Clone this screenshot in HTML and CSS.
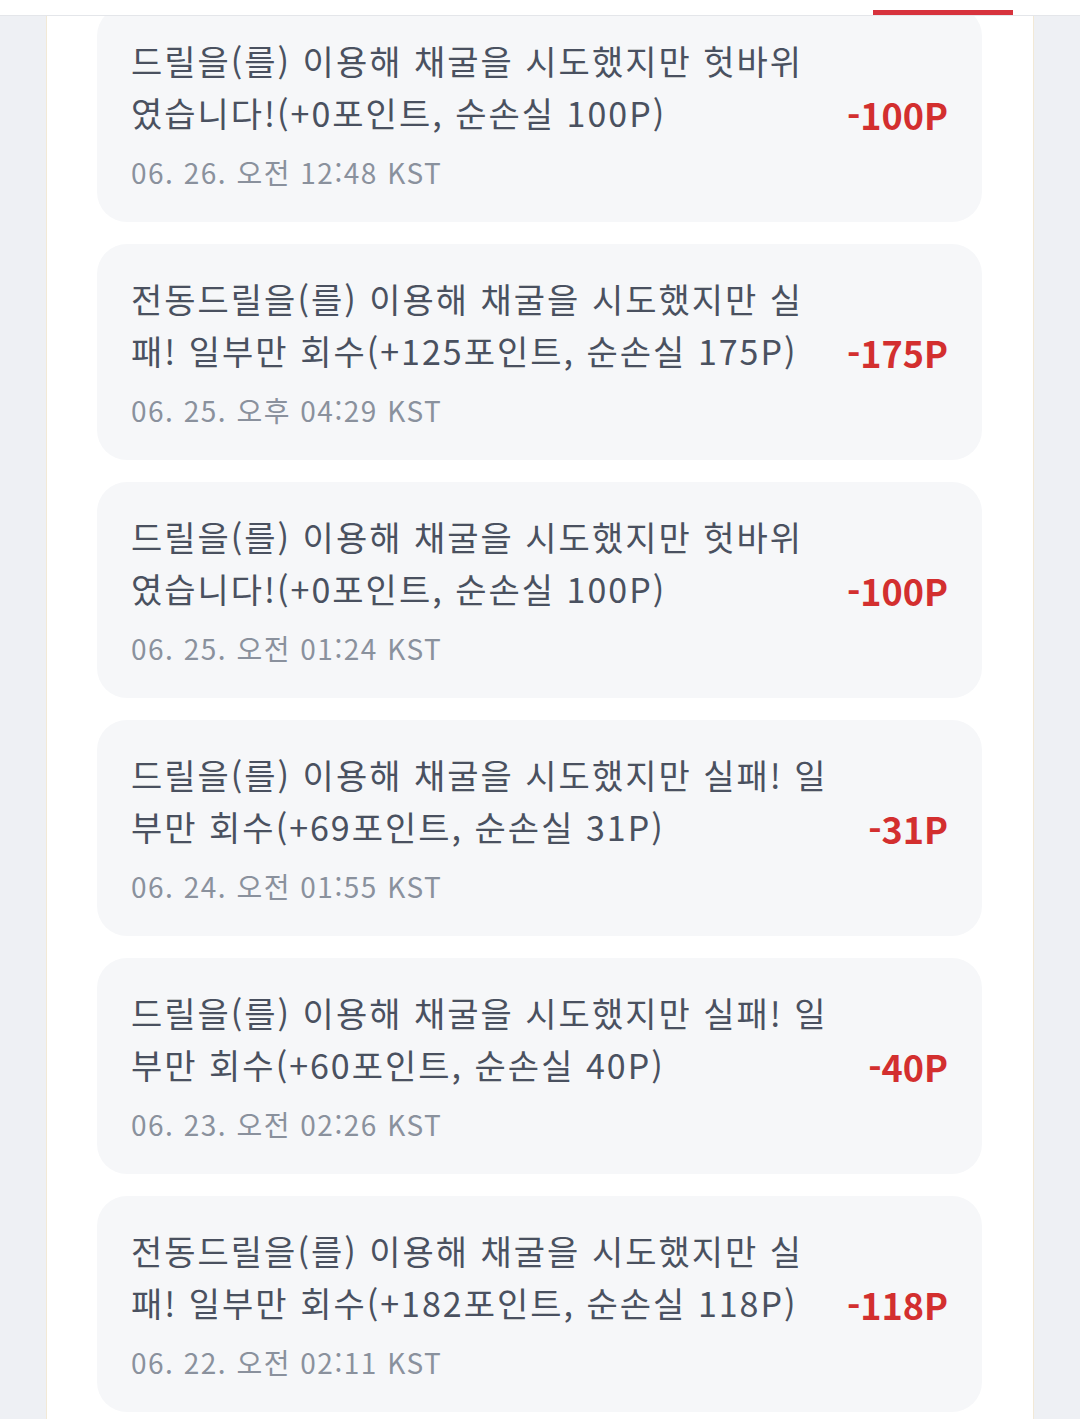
FILE: index.html
```html
<!DOCTYPE html>
<html lang="ko">
<head>
  <meta charset="UTF-8" />
  <title>포인트 내역</title>
  <link rel="stylesheet" href="styles.css">
</head>
<body>
  <div class="tabbar">
    <div class="tab"></div>
    <div class="tab active"></div>
  </div>

  <main class="panel">
    <ul class="history">
      <li class="entry">
        <div class="entry-body">
          <p class="entry-text">드릴을(를) 이용해 채굴을 시도했지만 헛바위였습니다!(+0포인트, 순손실 100P)</p>
          <p class="entry-date">06. 26. 오전 12:48 KST</p>
        </div>
        <span class="entry-amount">-100P</span>
      </li>
      <li class="entry">
        <div class="entry-body">
          <p class="entry-text">전동드릴을(를) 이용해 채굴을 시도했지만 실패! 일부만 회수(+125포인트, 순손실 175P)</p>
          <p class="entry-date">06. 25. 오후 04:29 KST</p>
        </div>
        <span class="entry-amount">-175P</span>
      </li>
      <li class="entry">
        <div class="entry-body">
          <p class="entry-text">드릴을(를) 이용해 채굴을 시도했지만 헛바위였습니다!(+0포인트, 순손실 100P)</p>
          <p class="entry-date">06. 25. 오전 01:24 KST</p>
        </div>
        <span class="entry-amount">-100P</span>
      </li>
      <li class="entry">
        <div class="entry-body">
          <p class="entry-text">드릴을(를) 이용해 채굴을 시도했지만 실패! 일부만 회수(+69포인트, 순손실 31P)</p>
          <p class="entry-date">06. 24. 오전 01:55 KST</p>
        </div>
        <span class="entry-amount">-31P</span>
      </li>
      <li class="entry">
        <div class="entry-body">
          <p class="entry-text">드릴을(를) 이용해 채굴을 시도했지만 실패! 일부만 회수(+60포인트, 순손실 40P)</p>
          <p class="entry-date">06. 23. 오전 02:26 KST</p>
        </div>
        <span class="entry-amount">-40P</span>
      </li>
      <li class="entry">
        <div class="entry-body">
          <p class="entry-text">전동드릴을(를) 이용해 채굴을 시도했지만 실패! 일부만 회수(+182포인트, 순손실 118P)</p>
          <p class="entry-date">06. 22. 오전 02:11 KST</p>
        </div>
        <span class="entry-amount">-118P</span>
      </li>
    </ul>
  </main>
</body>
</html>
```

FILE: styles.css
```css
* {
  box-sizing: border-box;
}

body {
  margin: 0;
  background: #eef0f4;
  font-family: "Noto Sans CJK KR", "Noto Sans", sans-serif;
  color: #4a5160;
}

.tabbar {
  position: fixed;
  top: 0;
  left: 0;
  right: 0;
  height: 16px;
  background: #fff;
  border-bottom: 1px solid #e4e6ea;
  display: flex;
  justify-content: flex-end;
  padding-right: 67px;
  z-index: 10;
}

.tab {
  width: 140px;
  height: 100%;
}

.tab.active {
  border-bottom: 5px solid #d7333d;
}

.panel {
  width: 988px;
  margin: 0 auto;
  min-height: 100vh;
  background: #fff;
  border-left: 1px solid #f2e9d6;
  border-right: 1px solid #f2e9d6;
  padding: 6px 51px 0 50px;
}

.history {
  list-style: none;
  margin: 0;
  padding: 0;
  display: flex;
  flex-direction: column;
  gap: 22px;
}

.entry {
  display: flex;
  align-items: center;
  gap: 28px;
  background: #f6f7f9;
  border-radius: 30px;
  padding: 29px 34px 30px 34px;
}

.entry-body {
  flex: 1;
  min-width: 0;
}

.entry-text {
  margin: 0;
  font-size: 34px;
  line-height: 52px;
  letter-spacing: 2px;
  color: #4a5160;
}

.entry-date {
  margin: 13px 0 0;
  font-size: 28px;
  line-height: 40px;
  letter-spacing: 1.5px;
  color: #8a919d;
}

.entry-amount {
  flex-shrink: 0;
  font-size: 36px;
  font-weight: 700;
  color: #d32f2f;
}
```
